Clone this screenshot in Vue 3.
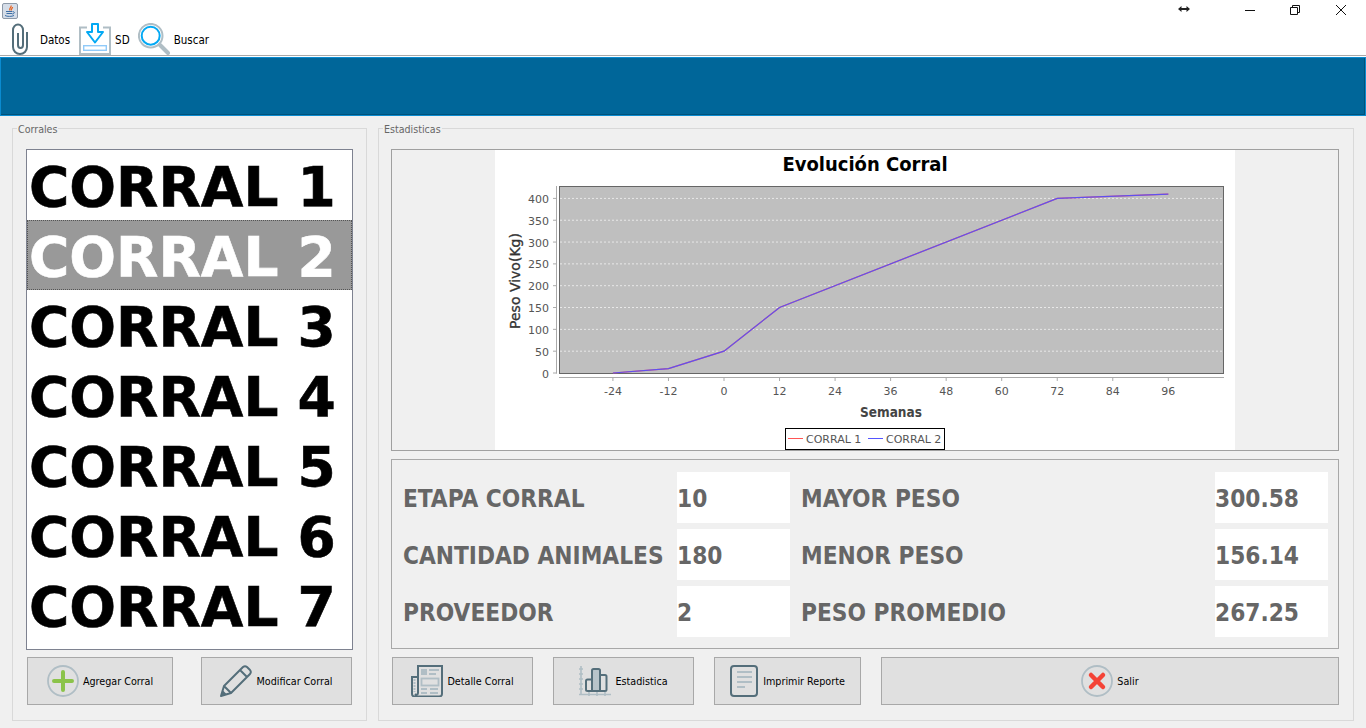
<script setup>
const corrales = ['CORRAL 1', 'CORRAL 2', 'CORRAL 3', 'CORRAL 4', 'CORRAL 5', 'CORRAL 6', 'CORRAL 7']
const selected = 1

const leftStats = [
  ['ETAPA CORRAL', '10', 'MAYOR PESO', '300.58'],
  ['CANTIDAD ANIMALES', '180', 'MENOR PESO', '156.14'],
  ['PROVEEDOR', '2', 'PESO PROMEDIO', '267.25'],
]

// chart scale, in page pixels (the svg viewBox uses the same numbers)
const xOf = (w) => 724 + (w / 12) * 55.54
const yOf = (v) => 373 - v * 0.4365

const yTicks = [0, 50, 100, 150, 200, 250, 300, 350, 400]
const xTicks = [-24, -12, 0, 12, 24, 36, 48, 60, 72, 84, 96]
const serie = [[-24, 0], [-12, 10], [0, 50], [12, 150], [72, 400], [96, 410]]
const points = serie.map(([w, v]) => `${xOf(w)},${yOf(v)}`).join(' ')
</script>

<template>
  <div class="window">
    <div class="titlebar">
      <svg class="java" width="16" height="16" viewBox="0 0 16 16">
        <rect x="0.5" y="0.5" width="15" height="15" rx="1.5" fill="#d5dde8" stroke="#8d99a8" />
        <path d="M9 2.500C10 4.500 6.500 5 8 7.500M10.500 4C10.500 5.500 8.500 6 9.500 7.500" fill="none" stroke="#e8601c" stroke-width="1.200" />
        <path d="M4 8.500h6.500M4.500 10.500h5.500M3 12.500c2 1.200 7 1.200 9 0M11 8.800c2 -.3 2 2 -.8 2.200" fill="none" stroke="#3c6ea5" stroke-width="1" />
      </svg>
      <div class="controls">
        <svg class="resize" width="14" height="8" viewBox="0 0 14 8">
          <path d="M1 4l3.500-3v2h5v-2l3.500 3-3.500 3v-2h-5v2z" fill="#222" />
        </svg>
        <svg class="ctl min" width="10" height="10" viewBox="0 0 10 10"><path d="M0 5.500h10" stroke="#111" fill="none" /></svg>
        <svg class="ctl max" width="10" height="10" viewBox="0 0 10 10"><path d="M.5 2.500h7v7h-7zM2.500 2.500v-2h7v7h-2" stroke="#111" fill="none" /></svg>
        <svg class="ctl close" width="10" height="10" viewBox="0 0 10 10"><path d="M0 0l10 10M10 0l-10 10" stroke="#111" fill="none" /></svg>
      </div>
    </div>

    <div class="toolbar">
      <div class="tool clip">
        <svg width="16" height="32" viewBox="0 0 16 32">
          <path d="M15 9v15a7 7 0 0 1-14 0V7a5 5.500 0 0 1 10 0v15a2.500 3 0 0 1-5 0V10" fill="none" stroke="#546e7a" stroke-width="2" />
        </svg>
        <span class="tool-label">Datos</span>
      </div>
      <div class="tool sd">
        <svg width="32" height="32" viewBox="0 0 32 32">
          <path d="M8 4.500H1V31h30V4.500h-7" fill="none" stroke="#b0bec5" stroke-width="2" />
          <rect x="4.700" y="22.700" width="22.600" height="4.600" fill="none" stroke="#90caf9" stroke-width="1.400" />
          <path d="M13 1h6v8h5L16 19.500 8 9h5z" fill="#fff" stroke="#03a9f4" stroke-width="2" stroke-linejoin="round" />
        </svg>
        <span class="tool-label">SD</span>
      </div>
      <div class="tool search">
        <svg width="32" height="32" viewBox="0 0 32 32">
          <circle cx="12.700" cy="12.700" r="11.800" fill="none" stroke="#b0bec5" stroke-width="2" />
          <circle cx="12.700" cy="12.700" r="9" fill="#fff" stroke="#03a9f4" stroke-width="2" />
          <path d="M22 22l8 8" stroke="#b0bec5" stroke-width="4" stroke-linecap="round" />
        </svg>
        <span class="tool-label">Buscar</span>
      </div>
    </div>
    <div class="sep"></div>

    <div class="banner"></div>

    <div class="main">
      <section class="group left">
        <span class="legend">Corrales</span>
        <ul class="list">
          <li v-for="(c, i) in corrales" :key="c" class="row" :class="{ active: i === selected }">{{ c }}</li>
        </ul>
        <div class="left-btns">
          <button class="btn agregar">
            <svg width="32" height="32" viewBox="0 0 32 32">
              <circle cx="16" cy="16" r="15" fill="none" stroke="#b0bec5" stroke-width="1.800" />
              <path d="M16 7v18M7 16h18" stroke="#8bc34a" stroke-width="4" stroke-linecap="round" />
            </svg>
            Agregar Corral
          </button>
          <button class="btn modificar">
            <svg width="32" height="32" viewBox="0 0 32 32">
              <path d="M1 31l3-10L23 2c1.500-1.200 2.500-1.200 4 0l3 3c1.200 1.500 1.200 2.500 0 4L11 28zM4 21l7 7M20 5l7 7" fill="none" stroke="#546e7a" stroke-width="2" stroke-linejoin="round" />
              <path d="M1 31l1.500-6 4.500 4.500z" fill="#546e7a" />
            </svg>
            Modificar Corral
          </button>
        </div>
      </section>

      <section class="group right">
        <span class="legend">Estadisticas</span>

        <div class="chart-box">
          <svg class="chart" width="740" height="300" viewBox="495 150 740 300">
            <text x="865" y="171" text-anchor="middle" class="title">Evolución Corral</text>

            <rect x="559.500" y="186.500" width="664" height="187" fill="#bfbfbf" stroke="#666" />
            <line v-for="v in yTicks.slice(1)" :key="'g' + v" x1="560" :x2="1223" :y1="yOf(v)" :y2="yOf(v)" class="grid" />

            <path d="M556.500 186v187.500M559 377.500h665" stroke="#aaa" fill="none" />
            <g v-for="v in yTicks" :key="'y' + v">
              <line x1="553" x2="557" :y1="yOf(v)" :y2="yOf(v)" stroke="#aaa" />
              <text x="549" :y="yOf(v) + 4.500" text-anchor="end" class="tick">{{ v }}</text>
            </g>
            <g v-for="w in xTicks" :key="'x' + w">
              <line :x1="xOf(w)" :x2="xOf(w)" y1="377" y2="381" stroke="#aaa" />
              <text :x="xOf(w)" y="395" text-anchor="middle" class="tick">{{ w }}</text>
            </g>

            <polyline :points="points" fill="none" stroke="#ff5555" stroke-width="1.200" />
            <polyline :points="points" fill="none" stroke="#5050ff" stroke-width="1.200" stroke-opacity=".92" />

            <text x="891" y="417" text-anchor="middle" class="axis-x">Semanas</text>
            <text transform="translate(520 281) rotate(-90)" text-anchor="middle" class="axis-y">Peso Vivo(Kg)</text>

            <rect x="785.500" y="428.500" width="159" height="21" fill="#fff" stroke="#000" />
            <line x1="788" x2="803" y1="438.500" y2="438.500" stroke="#ff5555" />
            <text x="806" y="443" class="tick">CORRAL 1</text>
            <line x1="868" x2="883" y1="438.500" y2="438.500" stroke="#5555ff" />
            <text x="886" y="443" class="tick">CORRAL 2</text>
          </svg>
        </div>

        <div class="stats">
          <template v-for="s in leftStats" :key="s[0]">
            <span class="stat-label">{{ s[0] }}</span>
            <span class="stat-value">{{ s[1] }}</span>
            <span class="stat-label second">{{ s[2] }}</span>
            <span class="stat-value">{{ s[3] }}</span>
          </template>
        </div>

        <div class="right-btns">
          <button class="btn detalle">
            <svg width="32" height="32" viewBox="0 0 32 32">
              <path d="M6 12H1v17c0 1.500 1.500 2.500 3 2.500h24c1.500 0 3-1 3-2.500V1H7v27c0 2-2 2-3 1" fill="none" stroke="#546e7a" stroke-width="2" />
              <path d="M3.500 14v13" stroke="#b0bec5" stroke-width="2" stroke-dasharray="2 1" />
              <path d="M10 4h6v6h-6z" fill="#b0bec5" />
              <path d="M18 5h10M18 9h7M10 24h6M19 24h8M10 28h6M19 28h8" stroke="#b0bec5" stroke-width="1.800" />
              <rect x="10.500" y="13.500" width="17" height="7" fill="none" stroke="#b0bec5" stroke-width="1.800" />
            </svg>
            Detalle Corral
          </button>
          <button class="btn estadistica">
            <svg width="32" height="32" viewBox="0 0 32 32">
              <path d="M2 1v29M0 4h4M0 9h4M0 14h4M0 19h4M0 24h4M0 29.500h32M10 27v4M18 27v4M26 27v4" stroke="#b0bec5" stroke-width="1.600" fill="none" />
              <rect x="13" y="4" width="8" height="22" fill="#b8c4ca" />
              <path d="M13 26V5.500q0-1.500 1.500-1.500h5q1.500 0 1.500 1.500V26M21 10h5q1.500 0 1.500 1.500V24.500q0 1.500-1.500 1.500H8.500q-1.500 0-1.500-1.500V16q0-1.500 1.500-1.500H13" fill="none" stroke="#546e7a" stroke-width="2" />
            </svg>
            Estadistica
          </button>
          <button class="btn imprimir">
            <svg width="28" height="32" viewBox="0 0 28 32">
              <rect x="1" y="1" width="26" height="30" rx="3" fill="none" stroke="#546e7a" stroke-width="2" />
              <path d="M7 7h15M7 12h15M7 17h15M7 22h8" stroke="#b0bec5" stroke-width="2" />
            </svg>
            Imprimir Reporte
          </button>
          <button class="btn salir">
            <svg width="32" height="32" viewBox="0 0 32 32">
              <circle cx="16" cy="16" r="15" fill="none" stroke="#b0bec5" stroke-width="1.800" />
              <path d="M10 10l12 12M22 10L10 22" stroke="#f44336" stroke-width="4.500" stroke-linecap="round" />
            </svg>
            Salir
          </button>
        </div>
      </section>
    </div>
  </div>
</template>

<style scoped>
.window {
  width: 1366px;
  height: 728px;
  overflow: hidden;
  display: flex;
  flex-direction: column;
  background: #f0f0f0;
  font-family: "DejaVu Sans Condensed", "DejaVu Sans", sans-serif;
  font-stretch: condensed;
  color: #000;
}

.titlebar {
  height: 20px;
  flex: none;
  display: flex;
  align-items: flex-start;
  justify-content: space-between;
  padding: 3px 20px 0 2px;
  background: #fff;
  box-sizing: border-box;
}

.controls {
  display: flex;
  align-items: flex-start;
  padding-top: 2px;
}
.resize { margin-right: 54px; }
.min { margin-right: 35px; }
.max { margin-right: 36px; }

.toolbar {
  height: 35px;
  flex: none;
  display: flex;
  background: #fff;
  padding-left: 12px;
  box-sizing: border-box;
}

.tool {
  display: flex;
  align-items: center;
  height: 32px;
  margin-top: 3px;
  font-size: 11.5px;
}
.clip svg { margin-right: 12px; }
.clip { margin-right: 9px; }
.sd svg { margin-right: 4px; }
.sd { margin-right: 8px; }
.search svg { margin-right: 4px; }
.tool-label { margin-top: 2px; }

.sep {
  height: 2px;
  flex: none;
  box-sizing: border-box;
  background: #fff;
  border-top: 1px solid #a8a8a8;
}

.banner {
  height: 59px;
  flex: none;
  box-sizing: border-box;
  background: #006699;
  border: 1px solid #0a8bd0;
  box-shadow: inset -1px -1px 0 #00527a;
}

.main {
  flex: 1;
  display: grid;
  grid-template-columns: 355px 976px;
  column-gap: 11px;
  padding: 12px 12px 7px 12px;
  box-sizing: border-box;
  min-height: 0;
}

.group {
  position: relative;
  border: 1px solid #d9d9d9;
  box-sizing: border-box;
  display: flex;
  flex-direction: column;
  padding-top: 20px;
}

.legend {
  position: absolute;
  top: -6px;
  left: 4px;
  padding: 0 1px;
  background: #f0f0f0;
  font-size: 10.6px;
  line-height: 13px;
  color: #666;
}

.left { padding-left: 13px; }
.right { padding-left: 12px; gap: 8px; }

.list {
  list-style: none;
  margin: 0;
  padding: 0;
  width: 327px;
  height: 501px;
  flex: none;
  box-sizing: border-box;
  border: 1px solid #7e8290;
  background: #fff;
  font-family: "DejaVu Sans", sans-serif;
  font-stretch: normal;
  font-weight: 700;
  font-size: 55px;
  color: #000;
  -webkit-text-stroke: .6px currentColor;
}

.row {
  height: 70px;
  line-height: 74px;
  padding-left: 2px;
  box-sizing: border-box;
  white-space: pre;
}
.row.active {
  background: #999;
  color: #fff;
  outline: 1px dotted #555;
  outline-offset: -1px;
}

.btn {
  display: flex;
  align-items: center;
  justify-content: center;
  gap: 4px;
  height: 48px;
  padding: 0;
  box-sizing: border-box;
  border: 1px solid #a8a8a8;
  background: #e0e0e0;
  font-family: inherit;
  font-stretch: condensed;
  font-size: 10.7px;
  color: #000;
  flex: none;
}

.left-btns {
  display: flex;
  margin: 7px 0 0 1px;
  gap: 28px;
}
.agregar { width: 146px; }
.modificar { width: 151px; }

.chart-box {
  width: 948px;
  height: 302px;
  flex: none;
  box-sizing: border-box;
  border: 1px solid #a0a0a0;
  display: flex;
  justify-content: center;
}
.chart { display: block; background: #fff; }

.title {
  font-family: "DejaVu Sans Condensed", "DejaVu Sans", sans-serif;
  font-size: 20px;
  font-weight: 700;
  fill: #000;
}
.tick {
  font-family: "DejaVu Sans", sans-serif;
  font-stretch: normal;
  font-size: 11px;
  fill: #555;
}
.axis-x {
  font-family: "DejaVu Sans Condensed", "DejaVu Sans", sans-serif;
  font-size: 13.5px;
  font-weight: 700;
  fill: #444;
}
.axis-y {
  font-family: "DejaVu Sans", sans-serif;
  font-stretch: normal;
  font-size: 14px;
  fill: #333;
  stroke: #333;
  stroke-width: .3px;
}
.grid {
  stroke: #fff;
  stroke-dasharray: 2 2;
  opacity: .65;
}

.stats {
  width: 948px;
  height: 190px;
  flex: none;
  box-sizing: border-box;
  border: 1px solid #a8a8a8;
  display: grid;
  grid-template-columns: 274px 113px 425px 113px;
  grid-auto-rows: 51px;
  row-gap: 6px;
  padding: 12px 0 0 11px;
  font-size: 24.2px;
  font-weight: 700;
  color: #666;
}
.stat-label {
  line-height: 55px;
  white-space: nowrap;
}
.stat-label.second { padding-left: 11px; }
.stat-value {
  background: #fff;
  line-height: 55px;
}

.right-btns {
  display: flex;
  gap: 20px;
  margin-left: 1px;
}
.detalle, .estadistica { width: 141px; }
.imprimir { width: 147px; gap: 5px; }
.salir { width: 458px; }
</style>

<style>
html, body { margin: 0; background: #f0f0f0; }
</style>
